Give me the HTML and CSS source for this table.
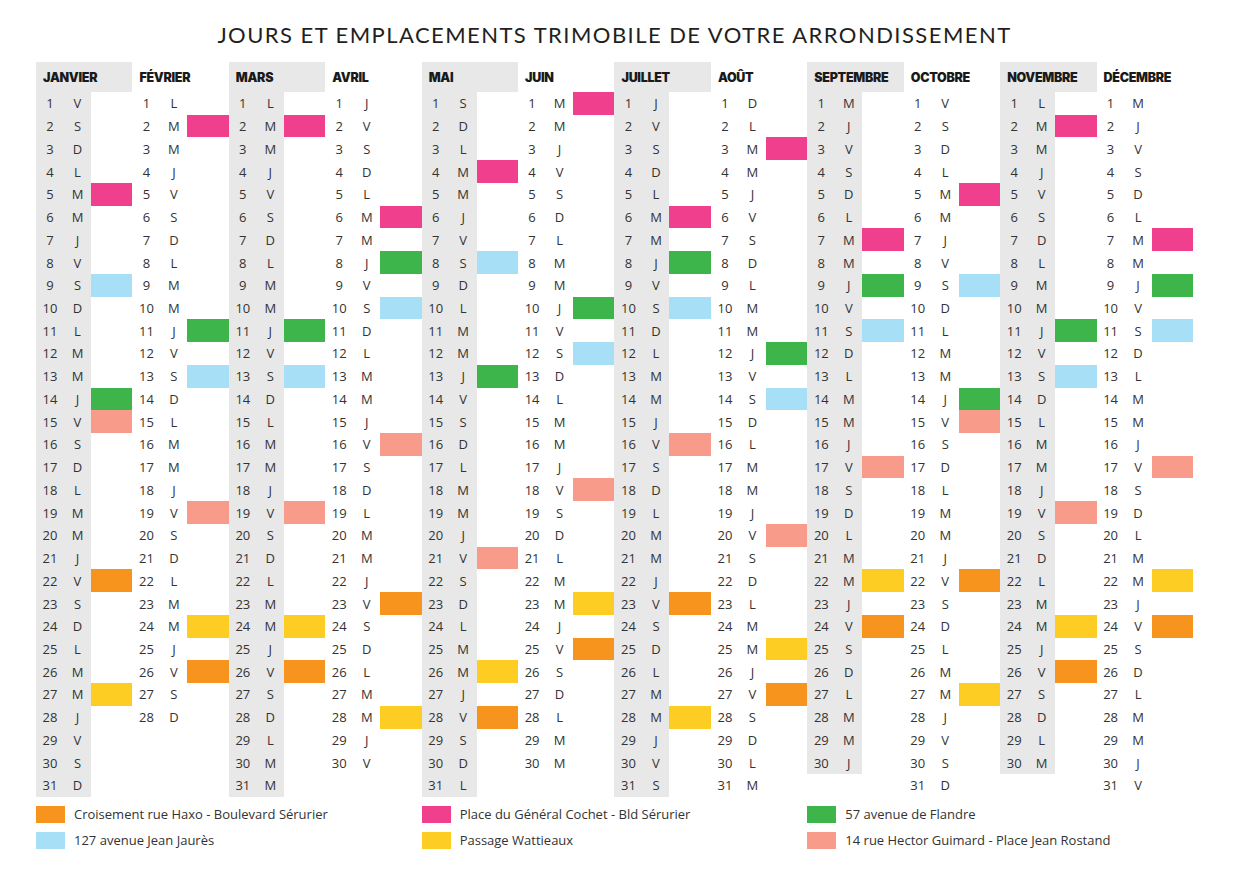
FILE: index.html
```html
<!DOCTYPE html>
<html lang="fr">
<head>
<meta charset="utf-8">
<title>Jours et emplacements Trimobile</title>
<link rel="stylesheet" href="styles.css">
</head>
<body>
<main class="page">
  <h1 class="title">JOURS ET EMPLACEMENTS TRIMOBILE DE VOTRE ARRONDISSEMENT</h1>
  <div class="calendar" id="calendar"></div>
  <ul class="legend">
    <li class="legend-item"><span class="swatch c-o"></span>Croisement rue Haxo - Boulevard Sérurier</li>
    <li class="legend-item"><span class="swatch c-b"></span>127 avenue Jean Jaurès</li>
    <li class="legend-item"><span class="swatch c-p"></span>Place du Général Cochet - Bld Sérurier</li>
    <li class="legend-item"><span class="swatch c-y"></span>Passage Wattieaux</li>
    <li class="legend-item"><span class="swatch c-g"></span>57 avenue de Flandre</li>
    <li class="legend-item"><span class="swatch c-s"></span>14 rue Hector Guimard - Place Jean Rostand</li>
  </ul>
</main>
<script src="script.js"></script>
</body>
</html>
```

FILE: styles.css
```css
* { box-sizing: border-box; }
body {
  margin: 0;
  background: #fff;
  color: #333;
  font-family: "Open Sans", "Noto Sans", sans-serif;
}
.page {
  width: 1193px;
  padding-left: 36px;
}
.title {
  margin: 0;
  height: 62px;
  padding-top: 21px;
  line-height: 28px;
  font-family: "Lato", "Noto Sans", sans-serif;
  font-weight: 400;
  font-size: 22px;
  letter-spacing: 1.45px;
  color: #231f20;
  text-align: center;
}
.calendar {
  display: grid;
  grid-template-columns: repeat(12, 1fr);
  align-items: start;
}
.month-head {
  height: 30px;
  display: flex;
  align-items: center;
  padding-left: 7px;
  font-family: "Inter", sans-serif;
  font-weight: 900;
  font-size: 12.5px;
  letter-spacing: -0.3px;
  color: #1a1a1a;
}
.month.odd .month-head { background: #e8e8e8; }
.days {
  display: grid;
  grid-template-columns: 28px 27px 1fr;
  grid-auto-rows: 22.74px;
}
.month.odd .days {
  background: linear-gradient(to right, #e8e8e8 55px, transparent 55px);
}
.num, .dow {
  display: flex;
  align-items: center;
  justify-content: center;
  font-size: 13px;
  color: #333;
}
.c-o { background: #f7941e; }
.c-b { background: #a6dff6; }
.c-p { background: #ef3f8d; }
.c-y { background: #fecd23; }
.c-g { background: #3eb54a; }
.c-s { background: #f89b8b; }
.legend {
  list-style: none;
  margin: 9px 0 0;
  padding: 0;
  display: grid;
  grid-template-columns: repeat(3, 1fr);
  grid-template-rows: 17px 17px;
  grid-auto-flow: column;
  row-gap: 9px;
}
.legend-item {
  display: flex;
  align-items: center;
  gap: 9px;
  font-size: 13px;
  color: #333;
  white-space: nowrap;
}
.swatch {
  width: 29px;
  height: 17px;
  flex: none;
}
```

FILE: script.js
```js
var LETTERS = ["L", "M", "M", "J", "V", "S", "D"];
var MONTHS = [
  ["JANVIER", 31, 4, {5:"p", 9:"b", 14:"g", 15:"s", 22:"o", 27:"y"}],
  ["FÉVRIER", 28, 0, {2:"p", 11:"g", 13:"b", 19:"s", 24:"y", 26:"o"}],
  ["MARS", 31, 0, {2:"p", 11:"g", 13:"b", 19:"s", 24:"y", 26:"o"}],
  ["AVRIL", 30, 3, {6:"p", 8:"g", 10:"b", 16:"s", 23:"o", 28:"y"}],
  ["MAI", 31, 5, {4:"p", 8:"b", 13:"g", 21:"s", 26:"y", 28:"o"}],
  ["JUIN", 30, 1, {1:"p", 10:"g", 12:"b", 18:"s", 23:"y", 25:"o"}],
  ["JUILLET", 31, 3, {6:"p", 8:"g", 10:"b", 16:"s", 23:"o", 28:"y"}],
  ["AOÛT", 31, 6, {3:"p", 12:"g", 14:"b", 20:"s", 25:"y", 27:"o"}],
  ["SEPTEMBRE", 30, 2, {7:"p", 9:"g", 11:"b", 17:"s", 22:"y", 24:"o"}],
  ["OCTOBRE", 31, 4, {5:"p", 9:"b", 14:"g", 15:"s", 22:"o", 27:"y"}],
  ["NOVEMBRE", 30, 0, {2:"p", 11:"g", 13:"b", 19:"s", 24:"y", 26:"o"}],
  ["DÉCEMBRE", 31, 2, {7:"p", 9:"g", 11:"b", 17:"s", 22:"y", 24:"o"}]
];
var cal = document.getElementById("calendar");
MONTHS.forEach(function (m, i) {
  var month = document.createElement("section");
  month.className = "month" + (i % 2 === 0 ? " odd" : "");
  var head = document.createElement("div");
  head.className = "month-head";
  head.textContent = m[0];
  month.appendChild(head);
  var days = document.createElement("div");
  days.className = "days";
  for (var d = 1; d <= m[1]; d++) {
    var n = document.createElement("span");
    n.className = "num";
    n.textContent = d;
    var w = document.createElement("span");
    w.className = "dow";
    w.textContent = LETTERS[(m[2] + d - 1) % 7];
    var mark = document.createElement("span");
    mark.className = "mark" + (m[3][d] ? " c-" + m[3][d] : "");
    days.appendChild(n);
    days.appendChild(w);
    days.appendChild(mark);
  }
  month.appendChild(days);
  cal.appendChild(month);
});
```
